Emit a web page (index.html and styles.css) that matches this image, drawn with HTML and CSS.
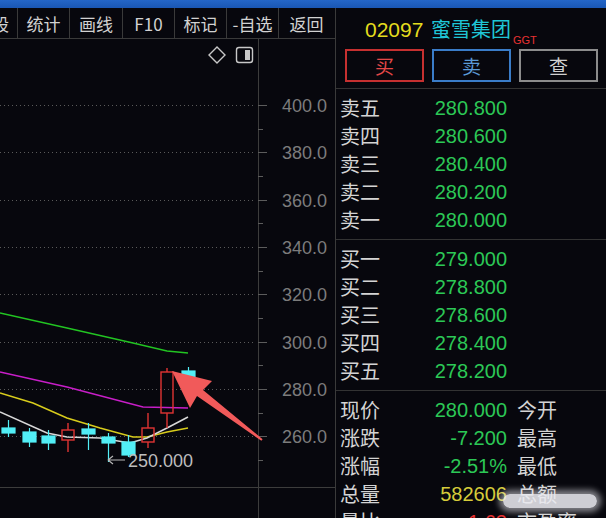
FILE: index.html
```html
<!DOCTYPE html>
<html lang="zh-CN">
<head>
    <meta charset="UTF-8">
    <meta name="viewport" content="width=device-width, initial-scale=1.0">
    <title>02097 蜜雪集团</title>
    <link rel="stylesheet" href="styles.css">
</head>
<body>
    <div class="topbar"></div>

    <div class="main">
        <!-- K-line side -->
        <div class="left">
            <div class="toolbar">
                <div class="tool tool-cut"><span>股</span></div>
                <div class="tool w52">统计</div>
                <div class="tool w53">画线</div>
                <div class="tool w52">F10</div>
                <div class="tool w52">标记</div>
                <div class="tool w52">-自选</div>
                <div class="tool last">返回</div>
            </div>

            <div class="chart">
                <svg width="335" height="479" viewBox="0 39 335 479">
                    <!-- chart icons -->
                    <path d="M217 47 L225 55 L217 63 L209 55 Z" fill="none" stroke="#c8c8c8" stroke-width="1.4"/>
                    <rect x="236.5" y="47.5" width="16" height="15" rx="2.5" fill="none" stroke="#c8c8c8" stroke-width="1.4"/>
                    <rect x="245" y="50" width="5" height="10" fill="#c8c8c8"/>

                    <!-- grid -->
                    <g stroke="#5a5a5a" stroke-width="1" stroke-dasharray="1 3">
                        <line x1="0" y1="105.5" x2="256" y2="105.5"/>
                        <line x1="0" y1="152.5" x2="256" y2="152.5"/>
                        <line x1="0" y1="200.5" x2="256" y2="200.5"/>
                        <line x1="0" y1="247.5" x2="256" y2="247.5"/>
                        <line x1="0" y1="294.5" x2="256" y2="294.5"/>
                        <line x1="0" y1="342.5" x2="256" y2="342.5"/>
                        <line x1="0" y1="389.5" x2="256" y2="389.5"/>
                        <line x1="0" y1="436.5" x2="256" y2="436.5"/>
                    </g>

                    <!-- axis -->
                    <g stroke="#3c3c3c" stroke-width="1">
                        <line x1="258.5" y1="39" x2="258.5" y2="518"/>
                        <line x1="0" y1="487.5" x2="335" y2="487.5"/>
                    </g>
                    <g stroke="#5c5c5c" stroke-width="1">
                        <line x1="258" y1="105.5" x2="267" y2="105.5"/>
                        <line x1="258" y1="152.5" x2="267" y2="152.5"/>
                        <line x1="258" y1="200.5" x2="267" y2="200.5"/>
                        <line x1="258" y1="247.5" x2="267" y2="247.5"/>
                        <line x1="258" y1="294.5" x2="267" y2="294.5"/>
                        <line x1="258" y1="342.5" x2="267" y2="342.5"/>
                        <line x1="258" y1="389.5" x2="267" y2="389.5"/>
                        <line x1="258" y1="436.5" x2="267" y2="436.5"/>
                        <line x1="258" y1="129.5" x2="263" y2="129.5"/>
                        <line x1="258" y1="176.5" x2="263" y2="176.5"/>
                        <line x1="258" y1="223.5" x2="263" y2="223.5"/>
                        <line x1="258" y1="271.5" x2="263" y2="271.5"/>
                        <line x1="258" y1="318.5" x2="263" y2="318.5"/>
                        <line x1="258" y1="365.5" x2="263" y2="365.5"/>
                        <line x1="258" y1="413.5" x2="263" y2="413.5"/>
                        <line x1="258" y1="460.5" x2="263" y2="460.5"/>
                    </g>
                    <g class="axis-label" text-anchor="end">
                        <text x="327" y="112">400.0</text>
                        <text x="327" y="159">380.0</text>
                        <text x="327" y="207">360.0</text>
                        <text x="327" y="254">340.0</text>
                        <text x="327" y="301">320.0</text>
                        <text x="327" y="349">300.0</text>
                        <text x="327" y="396">280.0</text>
                        <text x="327" y="443">260.0</text>
                    </g>

                    <!-- moving averages -->
                    <g fill="none" stroke-width="1.5">
                        <polyline stroke="#22c422" points="0,313 67,328 133,343 167,351 188,353"/>
                        <polyline stroke="#c81ec8" points="0,372 67,387 143,407 188,408"/>
                        <polyline stroke="#d8cc1c" points="0,393 33,403 67,418 100,428 133,437 147,437 167,432 188,428"/>
                        <polyline stroke="#d8d8d8" points="0,412 47,433 67,437 100,438 130,443 147,438 167,428 188,417"/>
                    </g>

                    <!-- falling candles -->
                    <g fill="#52eef6" stroke="#52eef6" stroke-width="1.2">
                        <line x1="8.5" y1="420" x2="8.5" y2="437"/>
                        <rect x="2" y="428" width="13" height="5"/>
                        <line x1="29.5" y1="428" x2="29.5" y2="447"/>
                        <rect x="23" y="432" width="13" height="10"/>
                        <line x1="48.5" y1="430" x2="48.5" y2="450"/>
                        <rect x="42" y="436" width="13" height="7"/>
                        <line x1="88.5" y1="423" x2="88.5" y2="450"/>
                        <rect x="82" y="429" width="13" height="5"/>
                        <line x1="108.5" y1="433" x2="108.5" y2="462"/>
                        <rect x="102" y="437" width="13" height="6"/>
                        <line x1="128.5" y1="435" x2="128.5" y2="457"/>
                        <rect x="122" y="442" width="13" height="13"/>
                        <line x1="188.5" y1="367" x2="188.5" y2="378"/>
                        <rect x="182" y="371" width="13" height="7"/>
                    </g>

                    <!-- rising candles -->
                    <g fill="none" stroke="#e03434" stroke-width="1.4">
                        <line x1="68" y1="423" x2="68" y2="430"/>
                        <line x1="68" y1="440" x2="68" y2="452"/>
                        <rect x="62" y="430" width="12" height="10"/>
                        <line x1="148" y1="413" x2="148" y2="428"/>
                        <line x1="148" y1="442" x2="148" y2="448"/>
                        <rect x="142" y="428" width="12" height="14"/>
                        <line x1="167" y1="368" x2="167" y2="372"/>
                        <line x1="167" y1="413" x2="167" y2="428"/>
                        <rect x="161" y="372" width="12" height="41"/>
                    </g>

                    <!-- low marker -->
                    <path d="M108 460 H125 M108 460 L113 456 M108 460 L113 464" fill="none" stroke="#b8b8b8" stroke-width="1.2"/>
                    <text class="low-label" x="128" y="467">250.000</text>

                    <!-- annotation arrow -->
                    <polygon fill="#f15a5a" points="172,371 212,381 203,390 262.6,439.2 261.4,440.8 197,396 190,408"/>
                </svg>
            </div>
        </div>

        <!-- quote side -->
        <div class="quote">
            <div class="title">
                <span class="code">02097</span>
                <span class="name">蜜雪集团</span><span class="tag">GGT</span>
            </div>

            <div class="actions">
                <div class="btn btn-buy">买</div>
                <div class="btn btn-sell">卖</div>
                <div class="btn btn-query">查</div>
            </div>

            <div class="book">
                <div class="row"><span class="lab">卖五</span><span class="val up">280.800</span></div>
                <div class="row"><span class="lab">卖四</span><span class="val up">280.600</span></div>
                <div class="row"><span class="lab">卖三</span><span class="val up">280.400</span></div>
                <div class="row"><span class="lab">卖二</span><span class="val up">280.200</span></div>
                <div class="row"><span class="lab">卖一</span><span class="val up">280.000</span></div>
            </div>

            <div class="book">
                <div class="row"><span class="lab">买一</span><span class="val up">279.000</span></div>
                <div class="row"><span class="lab">买二</span><span class="val up">278.800</span></div>
                <div class="row"><span class="lab">买三</span><span class="val up">278.600</span></div>
                <div class="row"><span class="lab">买四</span><span class="val up">278.400</span></div>
                <div class="row"><span class="lab">买五</span><span class="val up">278.200</span></div>
            </div>

            <div class="book stats">
                <div class="row"><span class="lab">现价</span><span class="val up">280.000</span><span class="lab2">今开</span></div>
                <div class="row"><span class="lab">涨跌</span><span class="val up">-7.200</span><span class="lab2">最高</span></div>
                <div class="row"><span class="lab">涨幅</span><span class="val up">-2.51%</span><span class="lab2">最低</span></div>
                <div class="row"><span class="lab">总量</span><span class="val vol">582606</span><span class="lab2">总额</span></div>
                <div class="row"><span class="lab">量比</span><span class="val red">1.63</span><span class="lab2">市盈率</span></div>
            </div>

            <div class="watermark"></div>
        </div>
    </div>
</body>
</html>
```

FILE: styles.css
```css
body {
    margin: 0;
    padding: 0;
    width: 606px;
    height: 518px;
    overflow: hidden;
    background-color: #07070d;
    font-family: "Liberation Sans", "Noto Sans CJK SC", sans-serif;
    color: #d4d4d4;
}
.topbar {
    height: 8px;
    background: linear-gradient(#2466c8, #1a57b4);
}
.main {
    display: flex;
    height: 510px;
}
.left {
    width: 335px;
    border-right: 1px solid #3a3a3a;
}
.toolbar {
    display: flex;
    height: 30px;
    border-bottom: 1px solid #3a3a3a;
    font-family: "Noto Sans CJK SC", sans-serif;
    font-size: 17px;
    color: #d2d2d2;
}
.tool {
    display: flex;
    align-items: center;
    justify-content: center;
    border-right: 1px solid #3a3a3a;
    box-sizing: border-box;
    white-space: nowrap;
    overflow: hidden;
}
.tool-cut {
    width: 18px;
    justify-content: flex-start;
}
.tool-cut span {
    margin-left: -8px;
}
.w52 {
    width: 52px;
}
.w53 {
    width: 53px;
}
.last {
    width: 55px;
    border-right: none;
}
.chart svg {
    display: block;
}
.axis-label {
    font-size: 18px;
    fill: #7c7c7c;
}
.low-label {
    font-size: 18px;
    fill: #bdbdbd;
}
.quote {
    flex: 1;
    position: relative;
    font-size: 20px;
}
.title {
    padding: 4px 0 0 29px;
    height: 34px;
    line-height: 34px;
    white-space: nowrap;
}
.code {
    font-size: 21px;
    color: #e4dc1e;
}
.name {
    font-family: "Noto Sans CJK SC", sans-serif;
    font-size: 20px;
    color: #1fc6d6;
    margin-left: 2px;
}
.tag {
    font-size: 11px;
    color: #e83232;
    margin-left: 2px;
    position: relative;
    top: 7px;
}
.actions {
    display: flex;
    gap: 8px;
    padding: 3px 0 6px 9px;
}
.btn {
    width: 79px;
    height: 33px;
    box-sizing: border-box;
    border: 2px solid;
    display: flex;
    align-items: center;
    justify-content: center;
    font-family: "Noto Sans CJK SC", sans-serif;
    font-size: 19px;
}
.btn-buy {
    border-color: #c63030;
    color: #e44848;
}
.btn-sell {
    border-color: #3a7cc8;
    color: #5b9ad6;
}
.btn-query {
    border-color: #8c8c8c;
    color: #d0d0d0;
}
.book {
    border-top: 1px solid #333;
    padding: 5px 0;
}
.row {
    display: flex;
    height: 28px;
    line-height: 28px;
    padding-left: 4px;
    white-space: nowrap;
}
.lab {
    width: 92px;
    font-family: "Noto Sans CJK SC", sans-serif;
}
.val {
    width: 75px;
    text-align: right;
}
.lab2 {
    margin-left: 10px;
    font-family: "Noto Sans CJK SC", sans-serif;
}
.up {
    color: #2cc856;
}
.vol {
    color: #d6cc3a;
}
.red {
    color: #e43030;
}
.watermark {
    position: absolute;
    z-index: 5;
    left: 167px;
    top: 486px;
    width: 94px;
    height: 14px;
    border-radius: 7px;
    background-color: rgba(234, 234, 240, 0.88);
    box-shadow: 0 0 6px 4px rgba(234, 234, 240, 0.55);
}
```
